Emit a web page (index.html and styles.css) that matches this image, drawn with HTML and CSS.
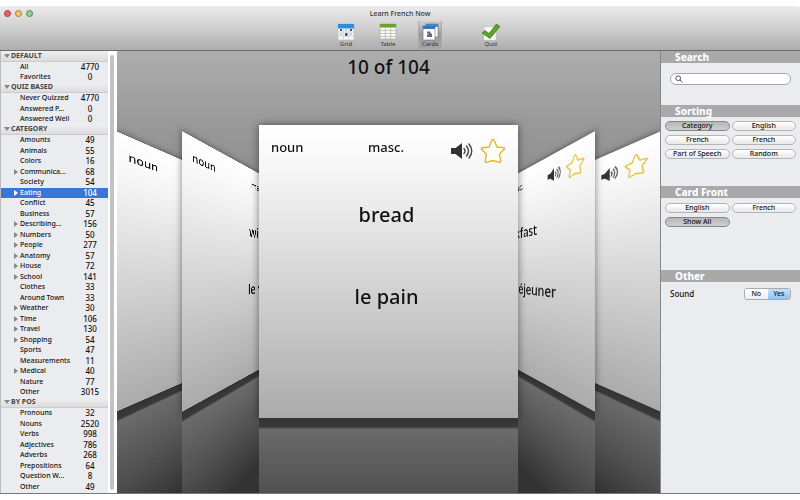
FILE: index.html
```html
<!DOCTYPE html>
<html lang="en">
<head>
    <meta charset="UTF-8">
    <meta name="viewport" content="width=device-width, initial-scale=1.0">
    <title>Learn French Now</title>
    <link rel="stylesheet" href="styles.css">
</head>
<body>
    <svg class="symbols" aria-hidden="true">
        <symbol id="speaker" viewBox="0 0 22 18">
            <path d="M0 6h4.500L11 1v16l-6.500-5H0z" fill="#333"/>
            <path d="M13 6.500q2 2.500 0 5M15.500 4q4 5 0 10M18 2q5.500 7 0 14" fill="none" stroke="#444" stroke-width="1.400" stroke-linecap="round"/>
        </symbol>
        <symbol id="star" viewBox="0 0 26 26">
            <path d="M13 1.500Q14 1.500 14.500 3L17 9l6.500 .7Q25.500 10 24 11.500L19.500 16l1.200 7Q20.800 25 19 24.200L13 22.500l-6 1.700Q5 25 5.200 23l1.200-7L1.800 11.500Q.5 10 2.500 9.700L9 9l2.500-6Q12 1.500 13 1.500z" fill="#fffef6" stroke="#e3b62a" stroke-width="1.400" stroke-linejoin="round"/>
        </symbol>
    </svg>

    <div class="window">
        <header class="titlebar">
            <div class="title-row">
                <div class="lights">
                    <button class="light red" aria-label="Close"></button>
                    <button class="light yellow" aria-label="Minimize"></button>
                    <button class="light green" aria-label="Zoom"></button>
                </div>
                <h1>Learn French Now</h1>
            </div>
            <nav class="toolbar">
                <button class="tool">
                    <svg viewBox="0 0 18 18">
                        <path d="M1 1h16v16H1z" fill="#f4f6f8" stroke="#b5b9bd" stroke-width=".6"/>
                        <path d="M1 1h16v4.500H1z" fill="#2f8be0"/>
                        <path d="M1 9h16M1 13h16M6.300 5v12M11.700 5v12" stroke="#c3c8cd" stroke-width=".6"/>
                        <path d="M3 6h2v2H3zM13 6h2v2h-2zM8 10h2.500v3H8z" fill="#456"/>
                        <path d="M8 6h2v2H8zM3 10h2v2H3zM13 10h2v2h-2z" fill="#b9cde0"/>
                    </svg>
                    <span>Grid</span>
                </button>
                <button class="tool">
                    <svg viewBox="0 0 18 18">
                        <path d="M1 1h16v15H1z" fill="#fafafa" stroke="#a5aaa0" stroke-width=".7"/>
                        <path d="M1 1h16v3.500H1z" fill="#6f9e2e"/>
                        <path d="M1 7.500h16M1 10.500h16M1 13.500h16M6.300 4v12M11.700 4v12" stroke="#a9b5a0" stroke-width=".7"/>
                    </svg>
                    <span>Table</span>
                </button>
                <button class="tool active">
                    <svg viewBox="0 0 18 18">
                        <path d="M5 1h12v13H5z" fill="#fff" stroke="#6d7f90" stroke-width=".7"/>
                        <path d="M5 1h12v3H5z" fill="#4584bd"/>
                        <path d="M2 3h12v14H2z" fill="#fff" stroke="#6d7f90" stroke-width=".7"/>
                        <path d="M2 3h12v3H2z" fill="#3578b8"/>
                        <path d="M6 8.500h3.500v2H11V14H6v-2.500h1.500v-1H6z" fill="#667"/>
                    </svg>
                    <span>Cards</span>
                </button>
                <button class="tool quiz">
                    <svg viewBox="0 0 18 18">
                        <path d="M2 4h12v13H2z" fill="#fff" stroke="#c5c5c5" stroke-width=".6"/>
                        <path d="M0 10l3-2.500 4 3L14.500 1 18 3.500 8 15.500z" fill="#5fa32c" stroke="#3f7d18" stroke-width=".8" stroke-linejoin="round"/>
                    </svg>
                    <span>Quiz</span>
                </button>
            </nav>
        </header>

        <main class="content">
            <aside class="sidebar">
                <ul class="tree">
                    <li class="group"><button>DEFAULT</button></li>
                    <li><a href="#"><span>All</span><b>4770</b></a></li>
                    <li><a href="#"><span>Favorites</span><b>0</b></a></li>
                    <li class="group"><button>QUIZ BASED</button></li>
                    <li><a href="#"><span>Never Quizzed</span><b>4770</b></a></li>
                    <li><a href="#"><span>Answered P...</span><b>0</b></a></li>
                    <li><a href="#"><span>Answered Well</span><b>0</b></a></li>
                    <li class="group"><button>CATEGORY</button></li>
                    <li><a href="#"><span>Amounts</span><b>49</b></a></li>
                    <li><a href="#"><span>Animals</span><b>55</b></a></li>
                    <li><a href="#"><span>Colors</span><b>16</b></a></li>
                    <li class="parent"><a href="#"><span>Communica...</span><b>68</b></a></li>
                    <li><a href="#"><span>Society</span><b>54</b></a></li>
                    <li class="parent selected"><a href="#"><span>Eating</span><b>104</b></a></li>
                    <li><a href="#"><span>Conflict</span><b>45</b></a></li>
                    <li><a href="#"><span>Business</span><b>57</b></a></li>
                    <li class="parent"><a href="#"><span>Describing...</span><b>156</b></a></li>
                    <li class="parent"><a href="#"><span>Numbers</span><b>50</b></a></li>
                    <li class="parent"><a href="#"><span>People</span><b>277</b></a></li>
                    <li class="parent"><a href="#"><span>Anatomy</span><b>57</b></a></li>
                    <li class="parent"><a href="#"><span>House</span><b>72</b></a></li>
                    <li class="parent"><a href="#"><span>School</span><b>141</b></a></li>
                    <li><a href="#"><span>Clothes</span><b>33</b></a></li>
                    <li><a href="#"><span>Around Town</span><b>33</b></a></li>
                    <li class="parent"><a href="#"><span>Weather</span><b>30</b></a></li>
                    <li class="parent"><a href="#"><span>Time</span><b>106</b></a></li>
                    <li class="parent"><a href="#"><span>Travel</span><b>130</b></a></li>
                    <li class="parent"><a href="#"><span>Shopping</span><b>54</b></a></li>
                    <li><a href="#"><span>Sports</span><b>47</b></a></li>
                    <li><a href="#"><span>Measurements</span><b>11</b></a></li>
                    <li class="parent"><a href="#"><span>Medical</span><b>40</b></a></li>
                    <li><a href="#"><span>Nature</span><b>77</b></a></li>
                    <li><a href="#"><span>Other</span><b>3015</b></a></li>
                    <li class="group"><button>BY POS</button></li>
                    <li><a href="#"><span>Pronouns</span><b>32</b></a></li>
                    <li><a href="#"><span>Nouns</span><b>2520</b></a></li>
                    <li><a href="#"><span>Verbs</span><b>998</b></a></li>
                    <li><a href="#"><span>Adjectives</span><b>786</b></a></li>
                    <li><a href="#"><span>Adverbs</span><b>268</b></a></li>
                    <li><a href="#"><span>Prepositions</span><b>64</b></a></li>
                    <li><a href="#"><span>Question W...</span><b>8</b></a></li>
                    <li><a href="#"><span>Other</span><b>49</b></a></li>
                </ul>
                <div class="scrollbar"></div>
            </aside>

            <section class="stage">
                <h2>10 of 104</h2>
                <div class="deck">
                    <article class="card left far">
                        <div class="card-top"><span>noun</span></div>
                    </article>
                    <article class="card left">
                        <div class="card-top"><span>noun</span><span class="gender">masc.</span></div>
                        <p>wine</p>
                        <p>le vin</p>
                    </article>
                    <article class="card right far">
                        <div class="card-top">
                            <button class="icon end" aria-label="Play sound"><svg class="speaker"><use href="#speaker"/></svg></button>
                            <button class="icon" aria-label="Favorite"><svg class="star"><use href="#star"/></svg></button>
                        </div>
                    </article>
                    <article class="card right">
                        <div class="card-top">
                            <span></span><span class="gender">masc.</span>
                            <button class="icon end" aria-label="Play sound"><svg class="speaker"><use href="#speaker"/></svg></button>
                            <button class="icon" aria-label="Favorite"><svg class="star"><use href="#star"/></svg></button>
                        </div>
                        <p>breakfast</p>
                        <p>le petit déjeuner</p>
                    </article>
                    <article class="card front">
                        <div class="card-top">
                            <span>noun</span><span class="gender">masc.</span>
                            <button class="icon end" aria-label="Play sound"><svg class="speaker"><use href="#speaker"/></svg></button>
                            <button class="icon" aria-label="Favorite"><svg class="star"><use href="#star"/></svg></button>
                        </div>
                        <p>bread</p>
                        <p>le pain</p>
                    </article>
                </div>
            </section>

            <aside class="panel">
                <section class="search">
                    <h3><label for="search">Search</label></h3>
                    <div class="search-box">
                        <svg viewBox="0 0 8 8"><circle cx="3.200" cy="3.200" r="2.400" fill="none" stroke="#555"/><path d="M5 5l2.500 2.500" stroke="#555"/></svg>
                        <input type="search" id="search">
                    </div>
                </section>
                <section class="sorting">
                    <h3>Sorting</h3>
                    <div class="pills">
                        <button class="pill on">Category</button>
                        <button class="pill">English</button>
                        <button class="pill">French</button>
                        <button class="pill">French</button>
                        <button class="pill">Part of Speech</button>
                        <button class="pill">Random</button>
                    </div>
                </section>
                <section class="card-front">
                    <h3>Card Front</h3>
                    <div class="pills">
                        <button class="pill">English</button>
                        <button class="pill">French</button>
                        <button class="pill on">Show All</button>
                    </div>
                </section>
                <section class="other">
                    <h3>Other</h3>
                    <div class="sound">
                        <span id="soundLabel">Sound</span>
                        <div class="segments" role="group" aria-labelledby="soundLabel">
                            <button>No</button>
                            <button class="on">Yes</button>
                        </div>
                    </div>
                </section>
            </aside>
        </main>
    </div>
</body>
</html>
```
FILE: styles.css
```css
* {
    margin: 0;
    padding: 0;
    box-sizing: border-box;
}

body {
    background-color: #fff;
    font-family: "Noto Sans", "Open Sans", sans-serif;
    font-weight: 500;
    font-size: 7px;
    line-height: 10px;
    color: #111;
}

button {
    border: none;
    background: none;
    font: inherit;
    color: inherit;
}

ul {
    list-style: none;
}

a {
    color: inherit;
    text-decoration: none;
}

.symbols {
    display: none;
}

.window {
    display: flex;
    flex-direction: column;
    min-height: calc(100vh - 12px);
    margin: 6px 0;
    border-bottom: 1px solid #777;
    border-radius: 3px 3px 0 0;
    overflow: hidden;
}

/* title bar and toolbar */
.titlebar {
    height: 45px;
    background: linear-gradient(#ebebeb, #cfcfcf 50%, #adadad);
    border-bottom: 1px solid #6c6c6c;
}

.title-row {
    display: grid;
    grid-template-columns: 1fr auto 1fr;
    align-items: center;
    height: 15px;
    padding: 0 4px;
}

.title-row h1 {
    font-size: 7px;
    font-weight: 500;
    color: #333;
}

.lights {
    display: flex;
    gap: 4px;
}

.light {
    width: 7px;
    height: 7px;
    border: 1px solid #777;
    border-radius: 50%;
}

.red {
    background: #e8606a;
    border-color: #a33c42;
}

.yellow {
    background: #f2c367;
    border-color: #a57a35;
}

.green {
    background: #93d28b;
    border-color: #52854c;
}

.toolbar {
    display: flex;
    justify-content: center;
    padding-left: 37px;
}

.tool {
    display: flex;
    flex-direction: column;
    align-items: center;
    width: 24px;
    height: 28px;
    margin: 0 9px;
    padding-top: 2px;
    font-size: 6px;
    line-height: 7px;
    color: #444;
}

.tool svg {
    width: 18px;
    height: 18px;
    flex: none;
}

.tool.active {
    background: linear-gradient(rgba(0, 0, 0, 0.04), rgba(0, 0, 0, 0.22) 50%, rgba(0, 0, 0, 0.06));
    border-left: 1px solid #aaa;
    border-right: 1px solid #aaa;
}

.tool.quiz {
    margin-left: 28px;
}

.content {
    flex: 1;
    display: flex;
}

/* category tree */
.sidebar {
    display: flex;
    width: 117px;
    border-right: 1px solid #fff;
    background: #ebecf0;
}

.tree {
    flex: 1;
    display: grid;
    grid-auto-rows: 1fr;
    padding-bottom: 1px;
    border-left: 1px solid #bbb;
}

.tree li {
    display: flex;
}

.tree a {
    flex: 1;
    display: flex;
    align-items: center;
    padding: 0 7px 0 13px;
}

.tree a::before {
    content: "";
    width: 6px;
}

.tree .parent a::before {
    width: 0;
    margin-right: 2px;
    border: 3px solid transparent;
    border-left: 4px solid #888;
    border-right: none;
}

.tree span {
    flex: 1;
    white-space: nowrap;
}

.tree b {
    width: 22px;
    font-size: 8px;
    font-weight: 500;
    line-height: 8px;
    text-align: center;
}

.tree .selected {
    background: #3a75d7;
    color: #fff;
}

.tree .selected a::before {
    border-left-color: #fff;
}

.group button {
    flex: 1;
    display: flex;
    align-items: center;
    gap: 1px;
    padding-left: 3px;
    background: linear-gradient(#efefef, #dcdcde);
    border-bottom: 1px solid #ccc;
    font-weight: 700;
    line-height: 8px;
    color: #444;
}

.group button::before {
    content: "";
    border: 3px solid transparent;
    border-top: 4px solid #888;
    border-bottom: none;
}

.scrollbar {
    width: 8px;
    background: #fff;
    border: 1px solid #fff;
    padding: 3px 1px 2px;
}

.scrollbar::before {
    content: "";
    display: block;
    height: 100%;
    border-radius: 3px;
    background: #c2c2c2;
}

/* card flow */
.stage {
    flex: 1;
    overflow: hidden;
    background: linear-gradient(#adadad, #999 74px, #777 240px, #333 340px);
}

.stage h2 {
    height: 74px;
    padding-top: 4px;
    font-size: 19px;
    font-weight: 500;
    line-height: 24px;
    text-align: center;
}

.deck {
    display: grid;
    grid-template-columns: 259px;
    justify-content: center;
    height: 293px;
    perspective: 277px;
}

.card {
    grid-area: 1 / 1;
    position: relative;
    background: linear-gradient(#fff, #f6f6f6 15%, #ababab);
    box-shadow: 0 0 8px rgba(0, 0, 0, 0.5);
    will-change: transform;
}

/* dark gap and mirrored floor under each card */
.card::after {
    content: "";
    position: absolute;
    top: 100%;
    left: 0;
    width: 100%;
    height: 300px;
    background: linear-gradient(#333, #3a3a3a 9px, #6b6b6b 11px, #4e4e4e 80px, #333 140px);
}

.left {
    transform-origin: left center;
    transform: translate3d(-86px, 0, -12px) rotateY(80deg);
}

.left.far {
    transform: translate3d(-155px, 0, -12px) rotateY(80deg);
}

.right {
    transform-origin: right center;
    transform: translate3d(86px, 0, -12px) rotateY(-80deg);
}

.right.far {
    transform: translate3d(155px, 0, -12px) rotateY(-80deg);
}

.card-top {
    display: flex;
    align-items: center;
    height: 46px;
    margin-bottom: 29px;
    padding: 5px 12px 0;
    font-size: 13px;
    line-height: 20px;
}

.card-top span {
    width: 97px;
    margin-top: -8px;
}

.card-top .icon {
    display: flex;
}

.card-top .end {
    margin-left: auto;
    margin-right: 7px;
}

.card-top .gender {
    width: auto;
}

.speaker {
    width: 22px;
    height: 18px;
}

.star {
    width: 26px;
    height: 26px;
}

.card p {
    margin-bottom: 52px;
    padding-right: 4px;
    font-size: 20px;
    font-weight: 500;
    line-height: 30px;
    text-align: center;
}

/* options panel */
.panel {
    width: 140px;
    background: #ebecf0;
    border-left: 1px solid #888;
}

.panel h3 {
    padding-left: 14px;
    background: #a9a9a9;
    color: #fff;
    font-size: 10px;
    font-weight: 800;
    line-height: 12px;
}

.search {
    min-height: 54px;
}

.sorting {
    min-height: 81px;
}

.card-front {
    min-height: 84px;
}

.search-box {
    display: flex;
    align-items: center;
    height: 12px;
    margin: 10px 9px;
    padding: 0 4px;
    background: #fff;
    border: 1px solid #a5a5a5;
    border-radius: 6px;
}

.search-box svg {
    width: 8px;
    height: 8px;
}

.search-box input {
    flex: 1;
    min-width: 0;
    height: 10px;
    border: none;
    outline: none;
    background: none;
    font: inherit;
}

.pills {
    display: grid;
    grid-template-columns: 1fr 1fr;
    gap: 4px 2px;
    padding: 4px;
}

.card-front .pills {
    padding-top: 5px;
}

.pill {
    height: 10px;
    border: 1px solid #b5b5b5;
    border-radius: 5px;
    background: linear-gradient(#fff, #e8e8e8);
    line-height: 8px;
    white-space: nowrap;
}

.pill.on {
    background: linear-gradient(#b5b5b5, #d0d0d0);
    border-color: #888;
}

.sound {
    display: flex;
    justify-content: space-between;
    align-items: center;
    padding: 6px 9px;
    font-size: 8px;
}

.segments {
    display: flex;
    width: 47px;
    height: 12px;
    border: 1px solid #aaa;
    border-radius: 3px;
    overflow: hidden;
    font-size: 7px;
}

.segments button {
    flex: 1;
    background: linear-gradient(#fff, #eee);
}

.segments .on {
    background: linear-gradient(#c5e2f9, #8fc4f2);
}
```
